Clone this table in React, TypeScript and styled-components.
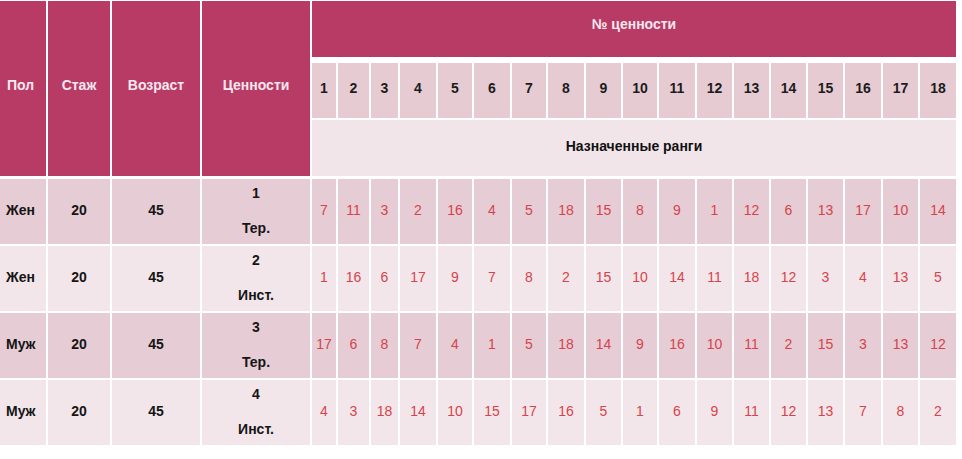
import React from 'react';
import styled, { createGlobalStyle } from 'styled-components';

const GlobalStyle = createGlobalStyle`
    html, body {
        margin: 0;
        padding: 0;
        background: #ffffff;
        font-family: "Liberation Sans", Arial, sans-serif;
    }
`

const rankWidths = [24, 31, 27, 36, 34, 36, 34, 36, 35, 34, 36, 35, 35, 35, 35, 36, 35, 36];
const columns = `46px 62px 88px 108px ${rankWidths.map(w => w + 'px').join(' ')}`;

const rows = [
    { sex: 'Жен', exp: '20', age: '45', num: '1', kind: 'Тер.', ranks: [7, 11, 3, 2, 16, 4, 5, 18, 15, 8, 9, 1, 12, 6, 13, 17, 10, 14] },
    { sex: 'Жен', exp: '20', age: '45', num: '2', kind: 'Инст.', ranks: [1, 16, 6, 17, 9, 7, 8, 2, 15, 10, 14, 11, 18, 12, 3, 4, 13, 5] },
    { sex: 'Муж', exp: '20', age: '45', num: '3', kind: 'Тер.', ranks: [17, 6, 8, 7, 4, 1, 5, 18, 14, 9, 16, 10, 11, 2, 15, 3, 13, 12] },
    { sex: 'Муж', exp: '20', age: '45', num: '4', kind: 'Инст.', ranks: [4, 3, 18, 14, 10, 15, 17, 16, 5, 1, 6, 9, 11, 12, 13, 7, 8, 2] },
];

const Page = styled.div`
    width: 962px;
    height: 459px;
    overflow: hidden;
    background: #ffffff;
`
const HeadGrid = styled.div`
    display: grid;
    grid-template-columns: ${columns};
    grid-template-rows: 60px 55px 56px;
    column-gap: 2px;
    row-gap: 2px;
    padding-top: 1px;
`
const BodyGrid = styled.div`
    display: grid;
    grid-template-columns: ${columns};
    grid-auto-rows: 65px;
    gap: 2px;
    margin-top: 3px;
`
const MainHead = styled.div<{ $left?: boolean }>`
    grid-row: 1 / span 3;
    background: #b83b66;
    color: #f8e8ef;
    font-weight: bold;
    font-size: 14px;
    display: flex;
    align-items: center;
    justify-content: ${p => p.$left ? 'flex-start' : 'center'};
    padding-left: ${p => p.$left ? '7px' : '0'};
    padding-bottom: 8px;
`
const GroupHead = styled.div`
    grid-column: 5 / span 18;
    height: 56px;
    background: #b83b66;
    color: #f8e8ef;
    font-weight: bold;
    font-size: 14px;
    display: flex;
    align-items: center;
    justify-content: center;
    padding-bottom: 10px;
    box-sizing: border-box;
`
const NumHead = styled.div`
    background: #e6cbd3;
    color: #1c1c1c;
    font-weight: bold;
    font-size: 14px;
    display: flex;
    align-items: center;
    justify-content: center;
    padding-bottom: 5px;
`
const SubHead = styled.div`
    grid-column: 5 / span 18;
    background: #f2e5ea;
    color: #111111;
    font-weight: bold;
    font-size: 14px;
    display: flex;
    align-items: center;
    justify-content: center;
    padding-bottom: 5px;
`
const Cell = styled.div<{ $even: boolean; $left?: boolean }>`
    background: ${p => p.$even ? '#f2e6ea' : '#e6ccd4'};
    color: #151515;
    font-weight: bold;
    font-size: 14px;
    display: flex;
    align-items: center;
    justify-content: ${p => p.$left ? 'flex-start' : 'center'};
    padding-left: ${p => p.$left ? '6px' : '0'};
    padding-bottom: 3px;
`
const ValueCell = styled(Cell)`
    flex-direction: column;
    justify-content: center;
    gap: 19px;
`
const RankCell = styled(Cell)`
    color: #d6434b;
    font-weight: normal;
`

const App: React.FC = () => {
    return (
        <Page>
            <GlobalStyle />
            <HeadGrid>
                <MainHead $left>Пол</MainHead>
                <MainHead>Стаж</MainHead>
                <MainHead>Возраст</MainHead>
                <MainHead>Ценности</MainHead>
                <GroupHead>№ ценности</GroupHead>
                {rankWidths.map((_, i) => <NumHead key={i}>{i + 1}</NumHead>)}
                <SubHead>Назначенные ранги</SubHead>
            </HeadGrid>
            <BodyGrid>
                {rows.map((r, i) => {
                    const even = i % 2 === 1;
                    return (
                        <React.Fragment key={i}>
                            <Cell $even={even} $left>{r.sex}</Cell>
                            <Cell $even={even}>{r.exp}</Cell>
                            <Cell $even={even}>{r.age}</Cell>
                            <ValueCell $even={even}>
                                <span>{r.num}</span>
                                <span>{r.kind}</span>
                            </ValueCell>
                            {r.ranks.map((v, j) => <RankCell key={j} $even={even}>{v}</RankCell>)}
                        </React.Fragment>
                    )
                })}
            </BodyGrid>
        </Page>
    )
}

export default App;
